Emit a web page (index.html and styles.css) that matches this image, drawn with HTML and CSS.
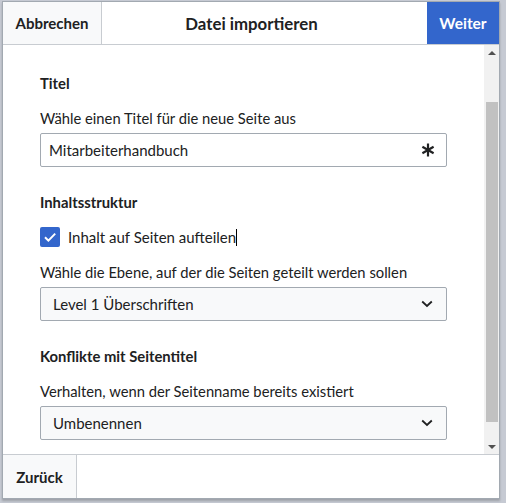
FILE: index.html
```html
<!DOCTYPE html>
<html lang="de">
<head>
<meta charset="utf-8">
<link rel="stylesheet" href="styles.css">
</head>
<body>
<div class="dialog">
  <div class="head">
    <button class="hbtn cancel">Abbrechen</button>
    <div class="title">Datei importieren</div>
    <button class="hbtn next">Weiter</button>
  </div>
  <div class="main">
    <div class="content">
      <div class="section">
        <div class="sec-title">Titel</div>
        <div class="label">Wähle einen Titel für die neue Seite aus</div>
        <div class="input">
          <span>Mitarbeiterhandbuch</span>
          <svg class="ico" width="14" height="14" viewBox="0 0 14 14"><g stroke="#202122" stroke-width="2.2" stroke-linecap="butt"><line x1="7" y1="0.5" x2="7" y2="13.5"/><line x1="1.4" y1="3.75" x2="12.6" y2="10.25"/><line x1="1.4" y1="10.25" x2="12.6" y2="3.75"/></g></svg>
        </div>
      </div>
      <div class="section">
        <div class="sec-title">Inhaltsstruktur</div>
        <div class="check-row">
          <span class="checkbox"><svg width="20" height="20" viewBox="0 0 20 20"><path d="M5 10.2 L8.4 13.6 L15.2 6.6" fill="none" stroke="#fff" stroke-width="2"/></svg></span>
          <span class="check-label">Inhalt auf Seiten aufteilen</span><span class="caret"></span>
        </div>
        <div class="label">Wähle die Ebene, auf der die Seiten geteilt werden sollen</div>
        <div class="select">
          <span>Level 1 Überschriften</span>
          <svg class="ico" width="12" height="8" viewBox="0 0 12 8"><path d="M1.2 1.5 L6 6 L10.8 1.5" fill="none" stroke="#202122" stroke-width="1.8"/></svg>
        </div>
      </div>
      <div class="section">
        <div class="sec-title">Konflikte mit Seitentitel</div>
        <div class="label">Verhalten, wenn der Seitenname bereits existiert</div>
        <div class="select">
          <span>Umbenennen</span>
          <svg class="ico" width="12" height="8" viewBox="0 0 12 8"><path d="M1.2 1.5 L6 6 L10.8 1.5" fill="none" stroke="#202122" stroke-width="1.8"/></svg>
        </div>
      </div>
    </div>
    <div class="scrollbar">
      <div class="arrow up"></div>
      <div class="track"><div class="thumb"></div></div>
      <div class="arrow down"></div>
    </div>
  </div>
  <div class="foot">
    <button class="hbtn back">Zurück</button>
  </div>
</div>
</body>
</html>
```
FILE: styles.css
```css
html, body {
  margin: 0;
  padding: 0;
}
body {
  width: 506px;
  height: 503px;
  background: #c6cad3;
  font-family: Lato, "Noto Sans", sans-serif;
  color: #202122;
  overflow: hidden;
}
.dialog {
  margin: 1px 0 0 2px;
  width: 498px;
  height: 498px;
  box-sizing: border-box;
  border: 1px solid #a2a9b1;
  background: #fff;
  display: flex;
  flex-direction: column;
  box-shadow: 0 2px 2px rgba(0,0,0,0.2);
}
.head {
  height: 43px;
  box-sizing: border-box;
  border-bottom: 1px solid #c8ccd1;
  display: flex;
  align-items: stretch;
}
.hbtn {
  font-family: inherit;
  font-size: 15px;
  font-weight: bold;
  color: #202122;
  border: 0;
  padding: 0;
  margin: 0;
  background: #f8f9fa;
}
.cancel {
  width: 99px;
  border-right: 1px solid #c8ccd1;
}
.title {
  flex: 1;
  display: flex;
  align-items: center;
  justify-content: center;
  font-weight: bold;
  font-size: 16.8px;
  padding-right: 26px;
}
.next {
  width: 72px;
  background: #36c;
  color: #fff;
  font-size: 15.5px;
}
.main {
  flex: 1;
  display: flex;
  min-height: 0;
}
.content {
  flex: 1;
  padding: 28px 37px 0 37px;
}
.section {
  margin-bottom: 25px;
}
.sec-title {
  font-weight: bold;
  font-size: 14.8px;
  line-height: 20px;
  margin-bottom: 15px;
}
.label {
  font-size: 14.75px;
  line-height: 20px;
  margin-bottom: 5px;
}
.input, .select {
  height: 34px;
  box-sizing: border-box;
  border: 1px solid #a2a9b1;
  border-radius: 2px;
  display: flex;
  align-items: center;
  justify-content: space-between;
  font-size: 15px;
  padding: 0 11px 0 8px;
}
.select {
  background: #f8f9fa;
  padding-left: 12px;
  padding-right: 13px;
}
.check-row {
  display: flex;
  align-items: center;
  margin-bottom: 15px;
  height: 20px;
}
.checkbox {
  width: 20px;
  height: 20px;
  border-radius: 2px;
  background: #36c;
  display: block;
}
.checkbox svg { display: block; }
.check-label {
  font-size: 15px;
  margin-left: 8px;
}
.caret {
  width: 1px;
  height: 17px;
  background: #000;
  margin-left: 0;
}
.scrollbar {
  width: 15px;
  background: #f1f1f1;
  display: flex;
  flex-direction: column;
}
.arrow {
  height: 15px;
  display: flex;
  align-items: center;
  justify-content: center;
}
.arrow::before {
  content: "";
  width: 0;
  height: 0;
  border-left: 4px solid transparent;
  border-right: 4px solid transparent;
}
.up::before { border-bottom: 4px solid #505050; }
.down::before { border-top: 4px solid #505050; }
.track {
  flex: 1;
  padding: 42px 1px 0 2px;
}
.thumb {
  height: 320px;
  background: #c1c1c1;
}
.foot {
  height: 44px;
  box-sizing: border-box;
  border-top: 1px solid #c8ccd1;
  display: flex;
}
.back {
  width: 74px;
  border-right: 1px solid #c8ccd1;
}
```
